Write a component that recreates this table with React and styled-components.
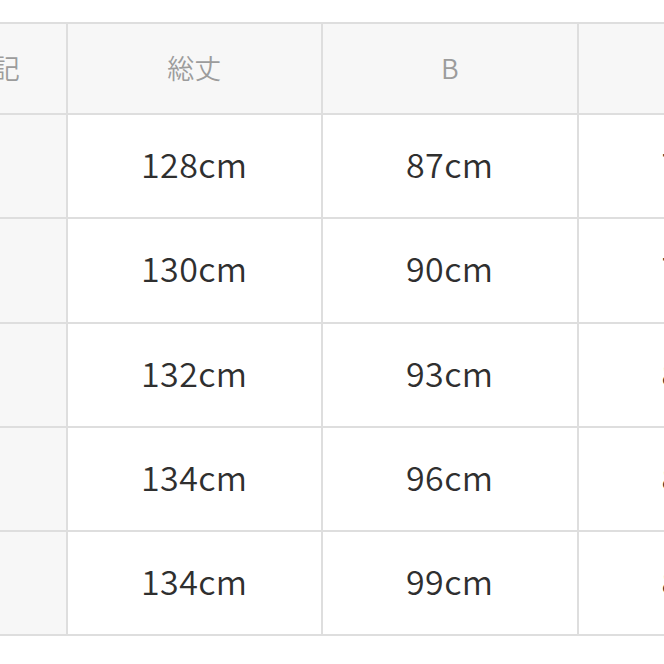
import React from "react";
import styled, { createGlobalStyle } from "styled-components";

const GlobalStyle = createGlobalStyle`
  html, body {
    margin: 0;
    padding: 0;
    background: #fff;
    overflow: hidden;
  }
  body {
    font-family: "Noto Sans CJK JP", "Noto Sans", sans-serif;
  }
`;

const Page = styled.div`
  width: 664px;
  height: 664px;
  overflow: hidden;
  padding-top: 22px;
  box-sizing: border-box;
`;

const Table = styled.div`
  display: grid;
  grid-template-columns: 147.5px 255.5px 255.5px 255.5px;
  margin-left: -80px;
  width: max-content;
  border-top: 2px solid #dedede;
`;

const Cell = styled.div`
  box-sizing: border-box;
  display: flex;
  align-items: center;
  justify-content: center;
  padding-bottom: ${(p) => (p.$head ? "3px" : "5px")};
  border-right: 2px solid #dedede;
  border-bottom: 2px solid #dedede;
  height: ${(p) => (p.$head ? "91px" : "104.3px")};
  background: ${(p) => (p.$head || p.$label ? "#f7f7f7" : "#ffffff")};
  color: ${(p) => (p.$head ? "#9c9c9c" : "#2f2f2f")};
  font-size: ${(p) => (p.$head ? "27px" : "34px")};
  font-weight: 350;
  letter-spacing: ${(p) => (p.$head ? "0" : "0.4px")};
  white-space: nowrap;
`;

const headers = ["表記", "総丈", "B", "W"];

const rows = [
  ["", "128cm", "87cm", "78cm"],
  ["", "130cm", "90cm", "78cm"],
  ["", "132cm", "93cm", "81cm"],
  ["", "134cm", "96cm", "84cm"],
  ["", "134cm", "99cm", "87cm"],
];

const App = () => {
  return (
    <Page>
      <GlobalStyle />
      <Table>
        {headers.map((h) => (
          <Cell key={h} $head>
            {h}
          </Cell>
        ))}
        {rows.map((row, i) =>
          row.map((v, j) => (
            <Cell key={`${i}-${j}`} $label={j === 0}>
              {v}
            </Cell>
          ))
        )}
      </Table>
    </Page>
  );
};

export default App;
